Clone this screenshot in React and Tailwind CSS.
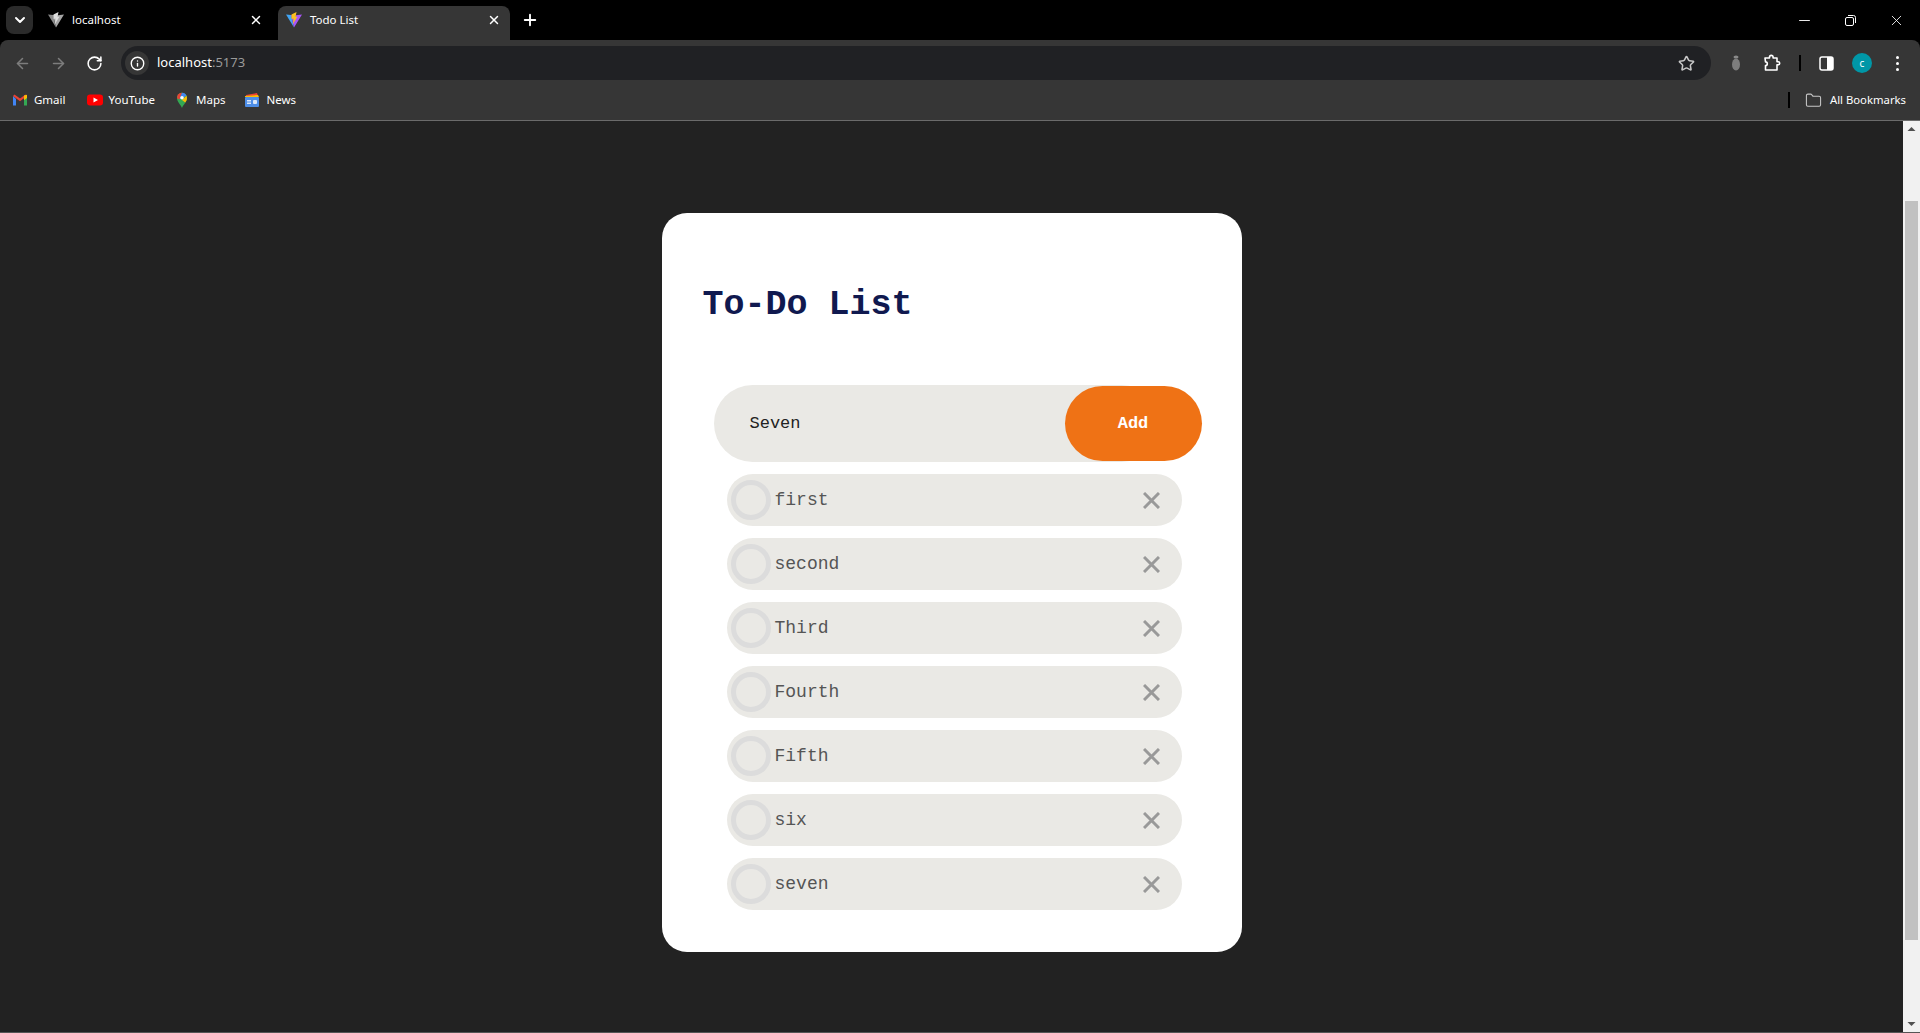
import { X, Plus, ChevronDown, ArrowLeft, ArrowRight, RotateCw, Info, Star, Minus, Folder } from 'lucide-react';

const todos = ['first', 'second', 'Third', 'Fourth', 'Fifth', 'six', 'seven'];

function ViteIcon({ gray }) {
  return (
    <svg className="w-4 h-4 shrink-0" viewBox="0 0 32 32">
      <path d="M0 5 L10 6 L16 31 Z" fill={gray ? '#8a8a8a' : '#41a5f5'} />
      <path d="M10 6 L16 7 L32 5 L16 31 Z" fill={gray ? '#a6a6a6' : '#a855f7'} />
      <path d="M11 5 L21 0 L19 10 L23 9 L14 24 L15 13 L11 14 Z" fill={gray ? '#dedede' : '#fcc21b'} />
    </svg>
  );
}

function GmailIcon() {
  return (
    <svg className="w-4 h-4 shrink-0" viewBox="0 0 16 16">
      <path d="M1 4v9.500h3V7z" fill="#4285f4" />
      <path d="M15 4v9.500h-3V7z" fill="#34a853" />
      <path d="M1 4 8 9.200 15 4 13.500 2.400 8 6.400 2.500 2.400z" fill="#ea4335" />
      <path d="M12 3.500 15 2.800V6L12 8.200z" fill="#fbbc04" />
    </svg>
  );
}

function YoutubeIcon() {
  return (
    <svg className="w-4 h-4 shrink-0" viewBox="0 0 16 16">
      <rect x="0" y="2.500" width="16" height="11" rx="3" fill="#ff0000" />
      <path d="M6.500 5.500 11 8l-4.500 2.500z" fill="#fff" />
    </svg>
  );
}

function MapsIcon() {
  return (
    <svg className="w-4 h-4 shrink-0" viewBox="0 0 16 16">
      <path d="M8 16C6.800 12.500 3 10.500 3 5.800a5 5 0 0 1 10 0C13 10.500 9.200 12.500 8 16z" fill="#34a853" />
      <path d="M4 2.500A5 5 0 0 1 8 .8L5.500 7.500 3.200 6.500A5 5 0 0 1 4 2.500z" fill="#ea4335" />
      <path d="M8 .8a5 5 0 0 1 4.500 3L5.500 7.500z" fill="#4285f4" />
      <path d="M12.500 3.800 13 5.800c0 2-.8 3.500-1.800 4.800L8 8z" fill="#fbbc04" />
      <circle cx="8" cy="5.800" r="1.800" fill="#fff" />
    </svg>
  );
}

function NewsIcon() {
  return (
    <svg className="w-4 h-4 shrink-0" viewBox="0 0 16 16">
      <path d="M2 3 13 1l1 3H2z" fill="#ea4335" />
      <path d="M1 4l13-1 1 2H1z" fill="#fbbc04" />
      <rect x="1" y="5" width="14" height="10" rx="1" fill="#4d8ee8" />
      <rect x="3" y="8" width="4" height="1.500" fill="#dbe8fb" />
      <rect x="3" y="10.500" width="4" height="1.500" fill="#dbe8fb" />
      <rect x="9" y="8" width="4" height="4" rx="1" fill="#dbe8fb" />
    </svg>
  );
}

function SidePanelIcon() {
  return (
    <svg className="w-[15px] h-[15px]" viewBox="0 0 15 15">
      <rect x="1" y="1" width="13" height="13" rx="2" fill="none" stroke="#fff" strokeWidth="1.500" />
      <rect x="8" y="1" width="6" height="13" fill="#fff" />
    </svg>
  );
}

function RestoreIcon() {
  return (
    <svg className="w-[11px] h-[11px]" viewBox="0 0 11 11" fill="none" stroke="#fff">
      <rect x="0.500" y="2.500" width="8" height="8" rx="1.500" />
      <path d="M3 .5h5.500a2 2 0 0 1 2 2V8" />
    </svg>
  );
}

function ExtensionIcon() {
  return (
    <svg className="w-[18px] h-[18px]" viewBox="0 0 18 18" fill="none" stroke="#fff" strokeWidth="1.600" strokeLinejoin="round">
      <path d="M2 4h4.500V3.200a1.800 1.800 0 0 1 3.600 0V4H14v3.800h1.200a1.500 1.500 0 0 1 0 3H14V16H2.500V11.500a1.800 1.800 0 0 0 0-3.600z" />
    </svg>
  );
}

function BugIcon() {
  return (
    <svg className="w-[10px] h-4" viewBox="0 0 10 16">
      <ellipse cx="5" cy="2" rx="2.500" ry="1.500" fill="#8a8a8a" />
      <ellipse cx="5" cy="9.500" rx="4" ry="6" fill="#7d7d7d" />
    </svg>
  );
}

function Bookmark({ icon, label, className }) {
  return (
    <div className={`flex items-center gap-[6px] ${className}`}>
      {icon}
      <span className="text-white text-[11.5px]">{label}</span>
    </div>
  );
}

function Tab({ active, gray, label }) {
  return (
    <div className={`w-[232px] h-[34px] flex items-center pl-2 pr-2 pb-[6px] rounded-t-lg ${active ? 'bg-[#363636]' : ''}`}>
      <ViteIcon gray={gray} />
      <span className="ml-2 flex-1 text-white text-[11.5px]">{label}</span>
      <X className="w-[14px] h-[14px] mr-px text-white" strokeWidth={2.500} />
    </div>
  );
}

function TodoItem({ label }) {
  return (
    <div className="w-[455px] h-[52px] flex items-center pl-1 pr-[22px] rounded-full bg-[#eae9e5]">
      <div className="w-10 h-10 rounded-full border-[5px] border-[#dcdcdc]" />
      <span className="ml-1 flex-1 text-[18px] text-[#555555]">{label}</span>
      <svg className="w-[17px] h-[17px]" viewBox="0 0 17 17" stroke="#999999" strokeWidth="3">
        <path d="M1 1 16 16M16 1 1 16" />
      </svg>
    </div>
  );
}

export default function App() {
  return (
    <div className="h-screen overflow-hidden flex flex-col bg-black font-['Noto_Sans',sans-serif]">
      {/* Tab strip */}
      <div className="h-10 shrink-0 flex items-end pl-[6px]">
        <div className="w-[27px] h-7 mb-[6px] rounded-lg bg-[#2b2b2b] flex items-center justify-center">
          <ChevronDown className="w-4 h-4 text-white" strokeWidth={3} />
        </div>
        <div className="ml-[7px] mr-[6px]"><Tab gray label="localhost" /></div>
        <Tab active label="Todo List" />
        <Plus className="w-[18px] h-[18px] ml-[11px] mb-[11px] text-white" strokeWidth={2.500} />
        <div className="ml-auto flex items-center self-start h-10">
          <Minus className="w-[17px] h-[17px] text-white" strokeWidth={1.300} />
          <div className="ml-8"><RestoreIcon /></div>
          <X className="w-[17px] h-[17px] ml-8 mr-[15px] text-white" strokeWidth={1.200} />
        </div>
      </div>

      {/* Toolbar */}
      <div className="h-10 shrink-0 pt-[6px] pl-[14px] pr-[14px] flex items-center bg-[#363636] rounded-t-lg">
        <ArrowLeft className="w-[17px] h-[17px] text-[#7d7d7d]" strokeWidth={2.200} />
        <ArrowRight className="w-[17px] h-[17px] ml-[19px] text-[#7d7d7d]" strokeWidth={2.200} />
        <RotateCw className="w-[17px] h-[17px] ml-[19px] text-white" strokeWidth={2.200} />
        <div className="w-[1590px] h-[34px] ml-[18px] flex items-center pl-1 rounded-full bg-[#202124]">
          <div className="w-6 h-6 rounded-full bg-[#363636] flex items-center justify-center">
            <Info className="w-[15px] h-[15px] text-white" strokeWidth={2.200} />
          </div>
          <span className="ml-2 text-[13px] text-white">localhost<span className="text-[#9a9a9a]">:5173</span></span>
          <Star className="w-[17px] h-[17px] ml-auto mr-4 text-[#c7c7c7]" strokeWidth={2.200} />
        </div>
        <div className="ml-5"><BugIcon /></div>
        <div className="ml-[22px]"><ExtensionIcon /></div>
        <div className="w-[2px] h-4 ml-[18px] bg-black" />
        <div className="ml-[18px]"><SidePanelIcon /></div>
        <div className="w-5 h-5 ml-[18px] rounded-full bg-[#0097a7] flex items-center justify-center text-white text-[10px]">c</div>
        <div className="ml-6 flex flex-col gap-[3px]">
          <div className="w-[3px] h-[3px] rounded-full bg-white" />
          <div className="w-[3px] h-[3px] rounded-full bg-white" />
          <div className="w-[3px] h-[3px] rounded-full bg-white" />
        </div>
      </div>

      {/* Bookmarks */}
      <div className="h-[41px] shrink-0 flex items-center pl-3 pr-[14px] bg-[#363636] border-b border-[#6b6b6b]">
        <Bookmark icon={<GmailIcon />} label="Gmail" />
        <Bookmark icon={<YoutubeIcon />} label="YouTube" className="ml-[21px]" />
        <Bookmark icon={<MapsIcon />} label="Maps" className="ml-[19px]" />
        <Bookmark icon={<NewsIcon />} label="News" className="ml-[19px]" />
        <div className="w-[2px] h-4 ml-auto bg-black" />
        <Folder className="w-[17px] h-[17px] ml-[15px] text-[#c7c7c7]" strokeWidth={1.500} />
        <span className="ml-2 text-[11.3px] text-white">All Bookmarks</span>
      </div>

      {/* Page */}
      <div className="flex-1 min-h-0 flex bg-[#222222]">
        <div className="flex-1 pt-[92px]">
          <div className="w-[580px] h-[739px] mx-auto pt-[72px] rounded-[25px] bg-white font-['Liberation_Mono',monospace]">
            <h1 className="h-10 pl-[41px] text-[35px] leading-10 font-bold text-[#10194f]">To-Do List</h1>

            <div className="flex items-center mt-[60px] ml-[52px]">
              <div className="w-[446px] h-[77px] flex items-center pl-9 rounded-full bg-[#eae9e5] text-[17px] text-[#222222]">Seven</div>
              <button className="w-[137px] h-[75px] -ml-[95px] rounded-full bg-[#ef7215] text-[17px] font-bold text-white">Add</button>
            </div>

            <div className="flex flex-col gap-3 mt-3 ml-[65px]">
              {todos.map((todo) => (
                <TodoItem key={todo} label={todo} />
              ))}
            </div>
          </div>
        </div>

        {/* Scrollbar */}
        <div className="w-[17px] flex flex-col items-center bg-[#f1f1f1]">
          <svg className="w-[17px] h-[17px] mb-[63px]" viewBox="0 0 17 17">
            <path d="M8.500 6 12.500 10H4.500z" fill="#505050" />
          </svg>
          <div className="w-[13px] h-[739px] bg-[#c1c1c1]" />
          <svg className="w-[17px] h-[17px] mt-auto" viewBox="0 0 17 17">
            <path d="M8.500 11 12.500 7H4.500z" fill="#505050" />
          </svg>
        </div>
      </div>
      <div className="h-px shrink-0 bg-[#555555]" />
    </div>
  );
}
